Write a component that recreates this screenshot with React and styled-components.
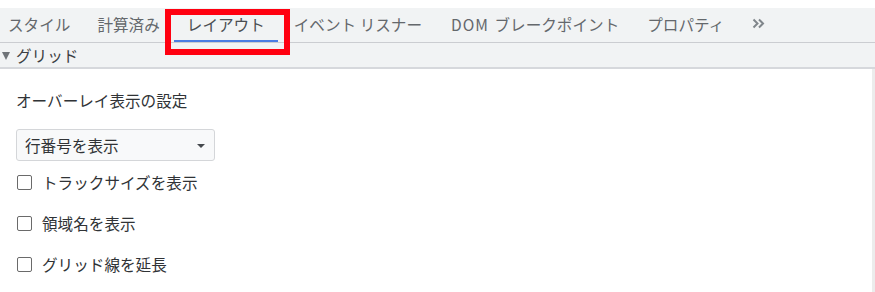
import React from "react";
import styled, { createGlobalStyle } from "styled-components";

const Global = createGlobalStyle`
  html, body { margin: 0; padding: 0; background: #ffffff; }
  body { font-family: "Noto Sans CJK JP", "Noto Sans", sans-serif; }
  * { box-sizing: border-box; }
`;

const Page = styled.div`
  width: 875px;
  height: 292px;
  padding-top: 8px;
  background: #ffffff;
  display: flex;
  flex-direction: column;
  overflow: hidden;
`;

const TabBar = styled.div`
  height: 35px;
  flex: none;
  display: flex;
  align-items: stretch;
  gap: 27px;
  padding-left: 8px;
  background: #f1f3f4;
  border-bottom: 1px solid #cbcdd1;
`;

const Tab = styled.div`
  position: relative;
  display: flex;
  align-items: center;
  margin-left: ${(p) => p.$shift || 0}px;
  padding-bottom: 2px;
  font-size: 15.6px;
  white-space: pre;
  word-spacing: ${(p) => p.$wordSpacing || 0}px;
  color: ${(p) => (p.$active ? "#4a4e52" : "#64686c")};

  &::after {
    content: "";
    display: ${(p) => (p.$active ? "block" : "none")};
    position: absolute;
    left: -13px;
    right: -13px;
    bottom: 0px;
    height: 2px;
    background: #4a7de3;
  }
`;

const Highlight = styled.span`
  position: absolute;
  left: -22px;
  right: -25px;
  top: 1px;
  height: 46px;
  border: 6px solid #ff0010;
  pointer-events: none;
  z-index: 2;
`;

const Latin = styled.span`
  letter-spacing: 1px;
`;

const More = styled.div`
  display: flex;
  align-items: center;
  margin-left: 1px;
  padding-bottom: 3px;
  color: #80868b;
`;

const SectionHeader = styled.div`
  height: 26px;
  flex: none;
  display: flex;
  align-items: center;
  gap: 2px;
  padding-left: 2px;
  background: #f1f3f4;
  border-bottom: 2px solid #d6d8dc;
  font-size: 15.6px;
  color: #3c4043;
`;

const Caret = styled.span`
  width: 0;
  height: 0;
  margin-top: 2px;
  margin-right: 4px;
  border-left: 4px solid transparent;
  border-right: 4px solid transparent;
  border-top: 8px solid #6f7478;
`;

const Content = styled.div`
  flex: 1;
  display: flex;
  flex-direction: column;
  padding: 19px 0 0 16px;
  border-right: 3px solid #ececec;
  width: 875px;
`;

const Label = styled.div`
  font-size: 15.6px;
  color: #303336;
  height: 24px;
  line-height: 24px;
`;

const Select = styled.div`
  margin-top: 17px;
  width: 199px;
  height: 32px;
  display: flex;
  align-items: center;
  justify-content: space-between;
  padding: 0 9px 0 8px;
  background: #f8f9fa;
  border: 1px solid #d4d6d9;
  border-radius: 3px;
  font-size: 15.6px;
  color: #303336;
`;

const Arrow = styled.span`
  width: 0;
  height: 0;
  margin-top: 2px;
  border-left: 4px solid transparent;
  border-right: 4px solid transparent;
  border-top: 4px solid #45494d;
`;

const CheckList = styled.div`
  display: flex;
  flex-direction: column;
  gap: 17px;
  margin-top: 9px;
`;

const CheckRow = styled.label`
  height: 24px;
  display: flex;
  align-items: center;
  gap: 10px;
  font-size: 15.6px;
  color: #303336;
`;

const Box = styled.span`
  width: 15px;
  height: 15px;
  margin-left: 1px;
  border: 1.5px solid #6a6a6a;
  border-radius: 2px;
  background: #ffffff;
`;

const Chevrons = () => (
  <svg width="13" height="11" viewBox="0 0 13 11" fill="none" stroke="currentColor" strokeWidth="2">
    <path d="M1.5 1.5 L5.5 5.5 L1.5 9.5" />
    <path d="M7 1.5 L11 5.5 L7 9.5" />
  </svg>
);

export default function App() {
  const tabs = [
    { key: "styles", label: "スタイル" },
    { key: "computed", label: "計算済み" },
    { key: "layout", label: "レイアウト", active: true },
    { key: "events", label: "イベント リスナー", shift: 2 },
    { key: "dom", label: <><Latin>DOM</Latin> ブレークポイント</>, shift: 2, wordSpacing: 2 },
    { key: "props", label: "プロパティ", shift: 1 },
  ];
  const checks = ["トラックサイズを表示", "領域名を表示", "グリッド線を延長"];
  return (
    <>
      <Global />
      <Page>
        <TabBar>
          {tabs.map((t) => (
            <Tab
              key={t.key}
              $active={t.active}
              $shift={t.shift}
              $wordSpacing={t.wordSpacing}
            >
              {t.label}
              {t.active && <Highlight />}
            </Tab>
          ))}
          <More>
            <Chevrons />
          </More>
        </TabBar>
        <SectionHeader>
          <Caret />
          グリッド
        </SectionHeader>
        <Content>
          <Label>オーバーレイ表示の設定</Label>
          <Select>
            行番号を表示
            <Arrow />
          </Select>
          <CheckList>
            {checks.map((c) => (
              <CheckRow key={c}>
                <Box />
                {c}
              </CheckRow>
            ))}
          </CheckList>
        </Content>
      </Page>
    </>
  );
}
